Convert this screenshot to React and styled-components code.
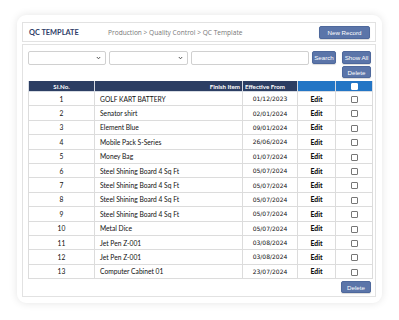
import React from "react";
import styled, { createGlobalStyle } from "styled-components";

const GlobalStyle = createGlobalStyle`
  body {
    margin: 0;
    background: #ffffff;
    font-family: "Open Sans", sans-serif;
  }
`;

const Page = styled.div`
  padding: 15px 17px 17px 17px;
`;

const Card = styled.div`
  width: 365px;
  height: 288px;
  box-sizing: border-box;
  background: #fff;
  border-radius: 9px;
  box-shadow: 0 0 9px rgba(0, 0, 0, 0.11);
  padding: 7px 6px 6px 5px;
  display: flex;
  flex-direction: column;
  gap: 2px;
`;

const Header = styled.div`
  height: 20px;
  box-sizing: border-box;
  border: 1px solid #e2e2e2;
  display: flex;
  align-items: center;
  padding: 0 5px 0 6px;
`;

const Title = styled.div`
  font-family: "Lato", sans-serif;
  font-weight: 700;
  font-size: 7.4px;
  color: #2f4068;
  width: 79px;
`;

const Crumb = styled.div`
  font-size: 6.6px;
  color: #777;
  flex: 1;
`;

const Button = styled.button`
  background: #5b75a9;
  color: #fff;
  border: 1px solid #4e689c;
  border-radius: 2px;
  font-family: "Liberation Sans", sans-serif;
  font-size: 6.2px;
  padding: 0;
  height: ${(p) => p.$h || 13}px;
  width: ${(p) => p.$w}px;
  box-shadow: 0 1px 1px rgba(0, 0, 0, 0.15);
`;

const Body = styled.div`
  flex: 1;
  border: 1px solid #e2e2e2;
  padding: 6px 3px 0 5px;
`;

const Filters = styled.div`
  display: grid;
  grid-template-columns: 78px 79px 118px 24px 29px;
  column-gap: 3px;
  align-items: start;
`;

const Select = styled.div`
  height: 14px;
  box-sizing: border-box;
  border: 1px solid #d0d0d0;
  border-radius: 2px;
  display: flex;
  align-items: center;
  justify-content: flex-end;
  padding-right: 4px;
  background: #fff;
`;

const Input = styled.div`
  height: 14px;
  box-sizing: border-box;
  border: 1px solid #d0d0d0;
  border-radius: 2px;
`;

const Stack = styled.div`
  display: flex;
  flex-direction: column;
  gap: 2px;
  margin-left: 3px;
`;

const Table = styled.table`
  margin-top: 3px;
  width: 344px;
  border-collapse: collapse;
  table-layout: fixed;
`;

const Th = styled.th`
  background: ${(p) => (p.$blue ? "#2275c5" : "#2c3e63")};
  color: #fff;
  font-family: "Lato", sans-serif;
  font-weight: 700;
  font-size: 6.2px;
  height: 10px;
  padding: 0 2px;
  border: 1px solid #d6dbe3;
  border-top: none;
  text-align: ${(p) => p.$align || "center"};
`;

const Td = styled.td`
  height: 13.4px;
  padding: 0 5px;
  border: 1px solid #dcdcdc;
  color: #111;
  font-family: ${(p) => (p.$date ? '"DejaVu Sans", sans-serif' : '"Lato", sans-serif')};
  font-size: ${(p) => (p.$date ? "6px" : p.$bold ? "6.8px" : "6.7px")};
  font-weight: ${(p) => (p.$bold ? 900 : 400)};
  text-align: ${(p) => p.$align || "center"};
`;

const Check = styled.span`
  display: inline-block;
  width: 5px;
  height: 5px;
  border: 1px solid ${(p) => (p.$light ? "#fff" : "#777")};
  background: #fff;
  border-radius: 1px;
  vertical-align: middle;
`;

const Footer = styled.div`
  display: flex;
  justify-content: flex-end;
  padding: 2px 1px 0 0;
`;

const Chevron = () => (
  <svg width="5" height="4" viewBox="0 0 5 4">
    <path d="M0.8 1 L2.5 2.8 L4.2 1" fill="none" stroke="#444" strokeWidth="0.9" />
  </svg>
);

const rows = [
  ["GOLF KART BATTERY", "01/12/2023"],
  ["Senator shirt", "02/01/2024"],
  ["Element Blue", "09/01/2024"],
  ["Mobile Pack S-Series", "26/06/2024"],
  ["Money Bag", "01/07/2024"],
  ["Steel Shining Board 4 Sq Ft", "05/07/2024"],
  ["Steel Shining Board 4 Sq Ft", "05/07/2024"],
  ["Steel Shining Board 4 Sq Ft", "05/07/2024"],
  ["Steel Shining Board 4 Sq Ft", "05/07/2024"],
  ["Metal Dice", "05/07/2024"],
  ["Jet Pen Z-001", "03/08/2024"],
  ["Jet Pen Z-001", "03/08/2024"],
  ["Computer Cabinet 01", "23/07/2024"],
];

export default function App() {
  return (
    <>
      <GlobalStyle />
      <Page>
        <Card>
          <Header>
            <Title>QC TEMPLATE</Title>
            <Crumb>Production &gt; Quality Control &gt; QC Template</Crumb>
            <Button $w={51} $h={13}>New Record</Button>
          </Header>
          <Body>
            <Filters>
              <Select><Chevron /></Select>
              <Select><Chevron /></Select>
              <Input />
              <Button $w={24}>Search</Button>
              <Stack>
                <Button $w={29}>Show All</Button>
                <Button $w={29} $h={12}>Delete</Button>
              </Stack>
            </Filters>
            <Table>
              <colgroup>
                <col style={{ width: 66 }} />
                <col style={{ width: 148 }} />
                <col style={{ width: 55 }} />
                <col style={{ width: 38 }} />
                <col style={{ width: 37 }} />
              </colgroup>
              <thead>
                <tr>
                  <Th>SI.No.</Th>
                  <Th $align="right">Finish Item</Th>
                  <Th $align="left">Effective From</Th>
                  <Th $blue />
                  <Th $blue><Check $light /></Th>
                </tr>
              </thead>
              <tbody>
                {rows.map(([item, date], i) => (
                  <tr key={i}>
                    <Td>{i + 1}</Td>
                    <Td $align="left">{item}</Td>
                    <Td $date>{date}</Td>
                    <Td $bold>Edit</Td>
                    <Td><Check /></Td>
                  </tr>
                ))}
              </tbody>
            </Table>
            <Footer>
              <Button $w={30} $h={12}>Delete</Button>
            </Footer>
          </Body>
        </Card>
      </Page>
    </>
  );
}
